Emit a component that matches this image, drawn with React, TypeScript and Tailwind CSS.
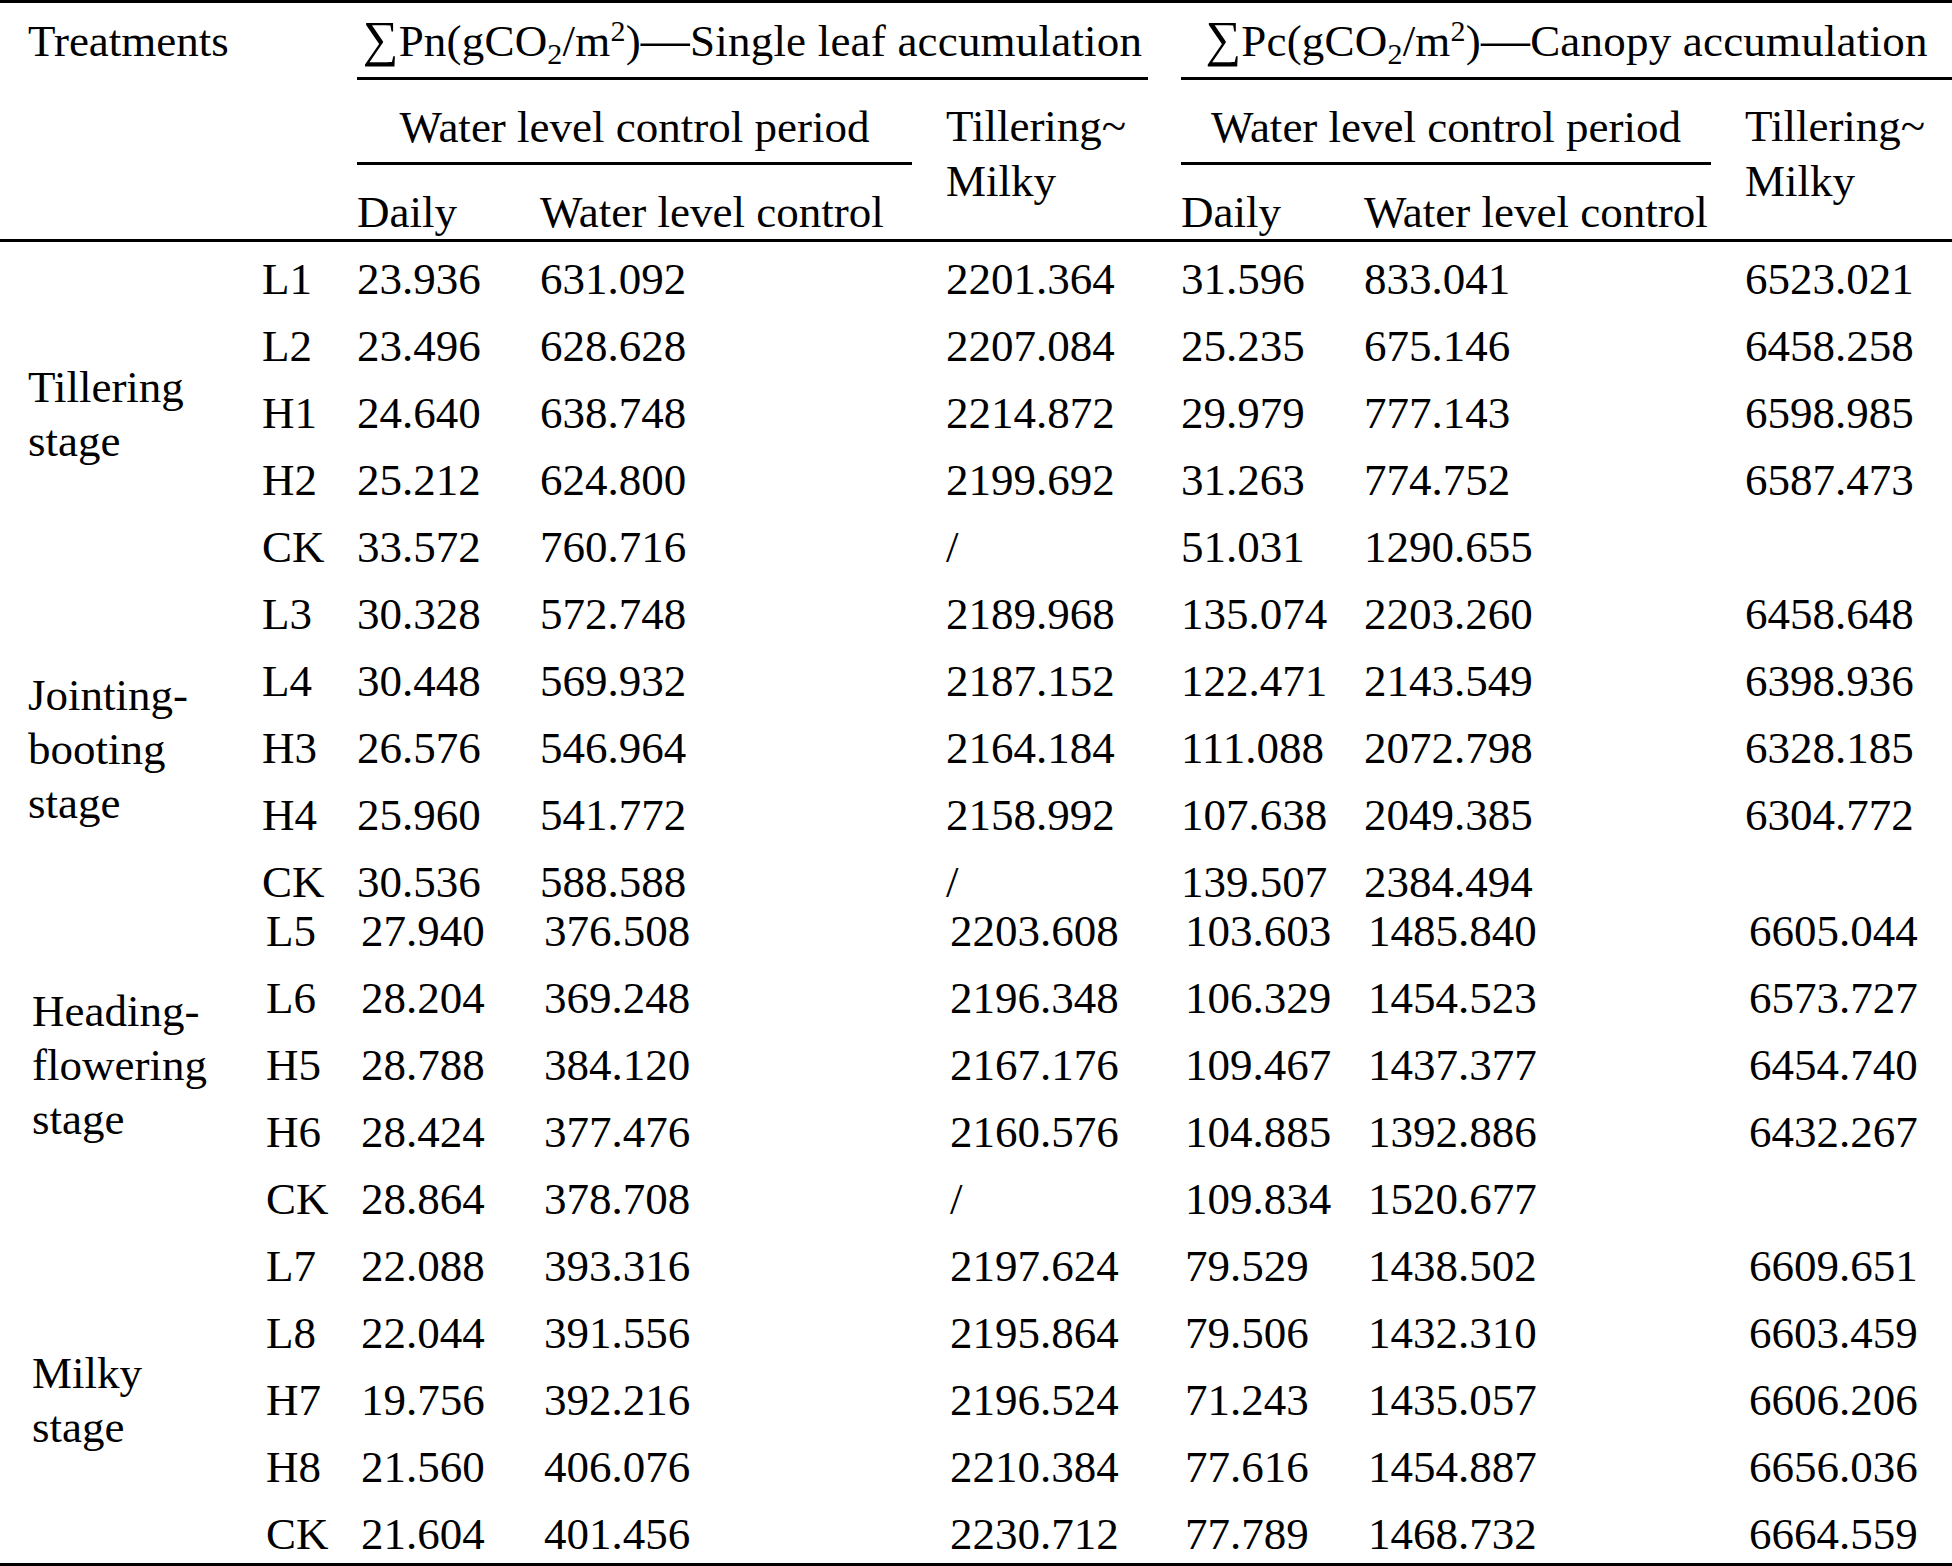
import React from "react";

type Row = [string, string, string, string, string, string, string];

const groups: { label: string[]; rows: Row[] }[] = [
  {
    label: ["Tillering", "stage"],
    rows: [
      ["L1", "23.936", "631.092", "2201.364", "31.596", "833.041", "6523.021"],
      ["L2", "23.496", "628.628", "2207.084", "25.235", "675.146", "6458.258"],
      ["H1", "24.640", "638.748", "2214.872", "29.979", "777.143", "6598.985"],
      ["H2", "25.212", "624.800", "2199.692", "31.263", "774.752", "6587.473"],
      ["CK", "33.572", "760.716", "/", "51.031", "1290.655", ""],
    ],
  },
  {
    label: ["Jointing-", "booting", "stage"],
    rows: [
      ["L3", "30.328", "572.748", "2189.968", "135.074", "2203.260", "6458.648"],
      ["L4", "30.448", "569.932", "2187.152", "122.471", "2143.549", "6398.936"],
      ["H3", "26.576", "546.964", "2164.184", "111.088", "2072.798", "6328.185"],
      ["H4", "25.960", "541.772", "2158.992", "107.638", "2049.385", "6304.772"],
      ["CK", "30.536", "588.588", "/", "139.507", "2384.494", ""],
    ],
  },
  {
    label: ["Heading-", "flowering", "stage"],
    rows: [
      ["L5", "27.940", "376.508", "2203.608", "103.603", "1485.840", "6605.044"],
      ["L6", "28.204", "369.248", "2196.348", "106.329", "1454.523", "6573.727"],
      ["H5", "28.788", "384.120", "2167.176", "109.467", "1437.377", "6454.740"],
      ["H6", "28.424", "377.476", "2160.576", "104.885", "1392.886", "6432.267"],
      ["CK", "28.864", "378.708", "/", "109.834", "1520.677", ""],
    ],
  },
  {
    label: ["Milky", "stage"],
    rows: [
      ["L7", "22.088", "393.316", "2197.624", "79.529", "1438.502", "6609.651"],
      ["L8", "22.044", "391.556", "2195.864", "79.506", "1432.310", "6603.459"],
      ["H7", "19.756", "392.216", "2196.524", "71.243", "1435.057", "6606.206"],
      ["H8", "21.560", "406.076", "2210.384", "77.616", "1454.887", "6656.036"],
      ["CK", "21.604", "401.456", "2230.712", "77.789", "1468.732", "6664.559"],
    ],
  },
];

const cols = "grid-cols-[255px_102px_183px_406px_235px_183px_381px_1fr]";

function Sub() {
  return <span className="relative top-[8px] text-[30px] leading-none">2</span>;
}
function Sup() {
  return <span className="relative top-[-15px] text-[30px] leading-none">2</span>;
}
function Sigma() {
  return <span className="text-[50px] leading-[0px]">∑</span>;
}
function Dash() {
  return <span className="text-[49px] leading-[0px]">—</span>;
}

function Group({ g, idx }: { g: (typeof groups)[number]; idx: number }) {
  const shifted = idx >= 2;
  return (
    <div
      className={
        "grid grid-cols-[255px_102px_183px_406px_235px_183px_381px_1fr] grid-rows-[67px_67px_67px_67px_67px] " +
        (shifted ? "pl-[4px] " : "") +
        (idx === 2 ? "mt-[-18.3px]" : "")
      }
    >
      <div className="col-start-1 row-start-1 row-span-5 flex flex-col justify-center pl-[28px] leading-[54px]">
        {g.label.map((l) => (
          <div key={l}>{l}</div>
        ))}
      </div>
      {g.rows.map((r, ri) => (
        <React.Fragment key={ri}>
          <div className="col-start-2 pl-[7px] leading-[67px] whitespace-nowrap">{r[0]}</div>
          <div className="col-start-3 leading-[67px] whitespace-nowrap">{r[1]}</div>
          <div className="col-start-4 leading-[67px] whitespace-nowrap">{r[2]}</div>
          <div className="col-start-5 leading-[67px] whitespace-nowrap">{r[3]}</div>
          <div className="col-start-6 leading-[67px] whitespace-nowrap">{r[4]}</div>
          <div className="col-start-7 leading-[67px] whitespace-nowrap">{r[5]}</div>
          <div className="col-start-8 leading-[67px] whitespace-nowrap">{r[6]}</div>
        </React.Fragment>
      ))}
    </div>
  );
}

export default function App() {
  return (
    <div className="w-[1952px] h-[1566px] overflow-hidden bg-white text-black font-['Liberation_Serif','Times_New_Roman',serif] text-[45px]">
      <div className="h-[3px] bg-black" />
      <div className={"grid " + cols + " grid-rows-[74px_3px_82px_3px_74px]"}>
        <div className="col-start-1 col-span-2 row-start-1 pl-[28px] pt-[13px] leading-[50px] whitespace-nowrap">
          Treatments
        </div>
        <div className="col-start-3 col-span-3 row-start-1 mr-[33px] pt-[13px] leading-[50px] text-center whitespace-nowrap tracking-[0.2px]">
          <Sigma />Pn(gCO<Sub />/m<Sup />)<Dash />Single leaf accumulation
        </div>
        <div className="col-start-6 col-span-3 row-start-1 pt-[13px] leading-[50px] text-center whitespace-nowrap tracking-[0.2px]">
          <Sigma />Pc(gCO<Sub />/m<Sup />)<Dash />Canopy accumulation
        </div>
        <div className="col-start-3 col-span-3 row-start-2 mr-[33px] bg-black" />
        <div className="col-start-6 col-span-3 row-start-2 bg-black" />

        <div className="col-start-3 col-span-2 row-start-3 mr-[34px] pt-[21.5px] leading-[50px] text-center whitespace-nowrap">
          Water level control period
        </div>
        <div className="col-start-6 col-span-2 row-start-3 mr-[34px] pt-[21.5px] leading-[50px] text-center whitespace-nowrap">
          Water level control period
        </div>
        <div className="col-start-5 row-start-3 row-span-3 pt-[19px] leading-[55px] whitespace-nowrap">
          <div>Tillering~</div>
          <div>Milky</div>
        </div>
        <div className="col-start-8 row-start-3 row-span-3 pt-[19px] leading-[55px] whitespace-nowrap">
          <div>Tillering~</div>
          <div>Milky</div>
        </div>
        <div className="col-start-3 col-span-2 row-start-4 mr-[34px] bg-black" />
        <div className="col-start-6 col-span-2 row-start-4 mr-[34px] bg-black" />

        <div className="col-start-3 row-start-5 pt-[21.5px] leading-[50px] whitespace-nowrap">Daily</div>
        <div className="col-start-4 row-start-5 pt-[21.5px] leading-[50px] whitespace-nowrap">
          Water level control
        </div>
        <div className="col-start-6 row-start-5 pt-[21.5px] leading-[50px] whitespace-nowrap">Daily</div>
        <div className="col-start-7 row-start-5 pt-[21.5px] leading-[50px] whitespace-nowrap">
          Water level control
        </div>
      </div>
      <div className="h-[3px] bg-black" />
      <div className="pt-[4px]">
        {groups.map((g, i) => (
          <Group key={i} g={g} idx={i} />
        ))}
      </div>
      <div className="h-[3px] bg-black mt-[-5px] relative" />
    </div>
  );
}
